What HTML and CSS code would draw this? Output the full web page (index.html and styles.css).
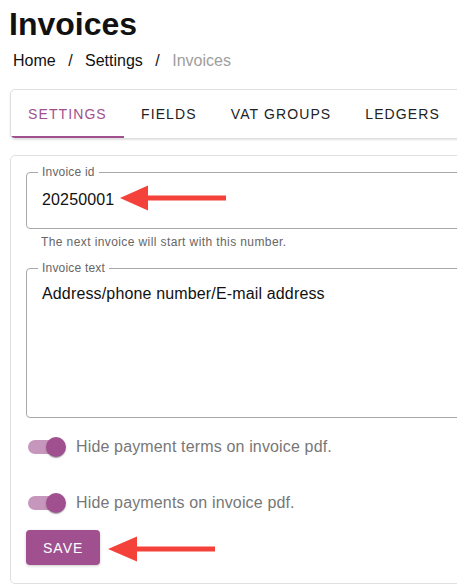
FILE: index.html
```html
<!DOCTYPE html>
<html lang="en">
<head>
  <meta charset="UTF-8">
  <meta name="viewport" content="width=device-width, initial-scale=1.0">
  <title>Invoices</title>
  <link rel="stylesheet" href="styles.css">
</head>
<body>
  <div class="page">
    <h1 class="title">Invoices</h1>
    <nav class="breadcrumbs">
      <a href="#">Home</a>
      <span class="sep">/</span>
      <a href="#">Settings</a>
      <span class="sep">/</span>
      <span class="current">Invoices</span>
    </nav>

    <div class="tabs">
      <button class="tab active">Settings</button>
      <button class="tab">Fields</button>
      <button class="tab">VAT groups</button>
      <button class="tab">Ledgers</button>
    </div>

    <div class="card">
      <fieldset class="field">
        <legend>Invoice id</legend>
        <input type="text" value="20250001">
      </fieldset>
      <div class="helper">The next invoice will start with this number.</div>

      <fieldset class="field field-text">
        <legend>Invoice text</legend>
        <textarea>Address/phone number/E-mail address</textarea>
      </fieldset>

      <label class="switch-row">
        <span class="switch"><span class="track"></span><span class="thumb"></span></span>
        <span class="switch-label">Hide payment terms on invoice pdf.</span>
      </label>
      <label class="switch-row">
        <span class="switch"><span class="track"></span><span class="thumb"></span></span>
        <span class="switch-label">Hide payments on invoice pdf.</span>
      </label>

      <button class="save">Save</button>
    </div>
  </div>

  <!-- annotation arrows -->
  <svg class="arrow arrow-id" width="110" height="28" viewBox="0 0 110 28">
    <polygon points="0,14 28,1.5 28,26.5" />
    <rect x="26" y="11.5" width="80" height="5" />
  </svg>
  <svg class="arrow arrow-save" width="110" height="28" viewBox="0 0 110 28">
    <polygon points="0,14 29,1.5 29,26.5" />
    <rect x="27" y="11.5" width="80" height="5" />
  </svg>
</body>
</html>
```

FILE: styles.css
```css
body {
  margin: 0;
  padding: 0 9px;
  font-family: "Liberation Sans", Arial, sans-serif;
  color: #111;
  background: #fff;
  overflow: hidden;
}
.page {
  width: 600px;
}
.title {
  font-size: 32px;
  font-weight: bold;
  line-height: 36px;
  margin: 6px 0 0 0;
}
.breadcrumbs {
  font-size: 16px;
  line-height: 19px;
  margin: 9px 0 0 4px;
}
.breadcrumbs a {
  color: #111;
  text-decoration: none;
}
.breadcrumbs .sep {
  margin: 0 8px;
}
.breadcrumbs .current {
  color: #9e9e9e;
}

.tabs {
  display: flex;
  margin-top: 19px;
  margin-left: 1px;
  border: 1px solid #e0e0e0;
  border-radius: 5px;
  box-shadow: 0 1px 2px rgba(0, 0, 0, 0.12);
  overflow: hidden;
}
.tab {
  min-width: 90px;
  height: 48px;
  padding: 2px 17px 0;
  border: none;
  border-bottom: 2px solid transparent;
  background: none;
  font-family: inherit;
  font-size: 14px;
  letter-spacing: 1.1px;
  text-transform: uppercase;
  color: #222;
  cursor: pointer;
}
.tab.active {
  color: #a0508f;
  border-bottom-color: #a0508f;
}

.card {
  margin-top: 16px;
  margin-left: 1px;
  border: 1px solid #e0e0e0;
  border-radius: 5px;
  padding: 9px 16px 18px 15px;
}
.field {
  margin: 0;
  padding: 0 15px;
  border: 1px solid #a8a8a8;
  border-radius: 4px;
}
.field legend {
  margin-left: -4px;
  padding: 0 4px;
  font-size: 12px;
  line-height: 14px;
  letter-spacing: 0.2px;
  color: #666;
}
.field input {
  display: block;
  width: 100%;
  border: none;
  outline: none;
  padding: 11px 0 19px;
  font-family: inherit;
  font-size: 16px;
  line-height: 19px;
  letter-spacing: 0.15px;
  color: #111;
  background: none;
}
.helper {
  font-size: 12px;
  line-height: 14px;
  letter-spacing: 0.4px;
  color: #666;
  margin: 6px 0 0 15px;
}
.field-text {
  margin-top: 12px;
}
.field textarea {
  display: block;
  width: 100%;
  height: 133px;
  border: none;
  outline: none;
  resize: none;
  padding: 9px 0 0;
  font-family: inherit;
  font-size: 16px;
  line-height: 19px;
  letter-spacing: 0.15px;
  color: #111;
  background: none;
}

.switch-row {
  display: flex;
  align-items: center;
  height: 38px;
  margin-top: 10px;
}
.switch-row + .switch-row {
  margin-top: 18px;
}
.switch {
  position: relative;
  width: 50px;
  height: 38px;
}
.switch .track {
  position: absolute;
  left: 2px;
  top: 12px;
  width: 34px;
  height: 14px;
  border-radius: 7px;
  background: #a0508f;
  opacity: 0.6;
}
.switch .thumb {
  position: absolute;
  left: 20px;
  top: 9px;
  width: 20px;
  height: 20px;
  border-radius: 50%;
  background: #a0508f;
  box-shadow: 0 2px 1px -1px rgba(0, 0, 0, 0.2), 0 1px 1px rgba(0, 0, 0, 0.14), 0 1px 3px rgba(0, 0, 0, 0.12);
}
.switch-label {
  font-size: 16px;
  letter-spacing: 0.15px;
  color: #777;
}

.save {
  display: block;
  margin-top: 8px;
  height: 35px;
  padding: 0 17px;
  border: none;
  border-radius: 4px;
  background: #a0508f;
  color: #fff;
  font-family: inherit;
  font-size: 14px;
  letter-spacing: 1px;
  text-transform: uppercase;
  box-shadow: 0 1px 3px rgba(0, 0, 0, 0.2);
  cursor: pointer;
}

.arrow {
  position: absolute;
  fill: #f4423a;
}
.arrow-id {
  left: 120px;
  top: 184px;
}
.arrow-save {
  left: 108px;
  top: 535px;
}
```
